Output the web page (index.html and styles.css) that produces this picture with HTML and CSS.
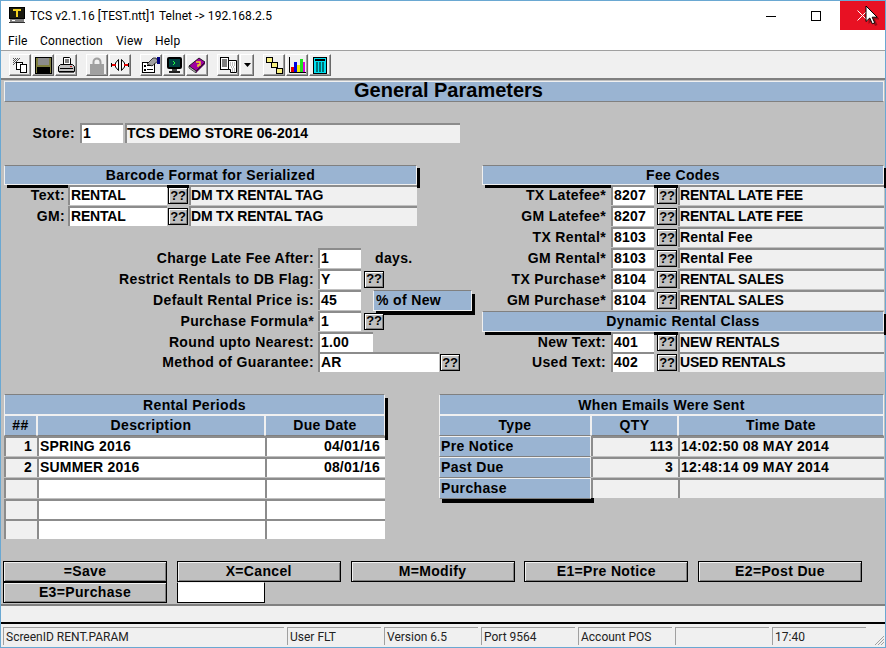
FILE: index.html
```html
<!DOCTYPE html>
<html lang="en">
<head>
<meta charset="utf-8">
<title>TCS v2.1.16</title>
<link rel="stylesheet" href="styles.css">
</head>
<body>
<div class="window">
  <header class="titlebar">
    <svg class="appicon" width="16" height="16" viewBox="0 0 16 16"><rect x="0" y="0" width="16" height="12" fill="#000"/><rect x="1" y="1" width="14" height="10" fill="#1a1a10"/><path d="M4 2h8v2H9v6H7V4H4z" fill="#f0d020"/><rect x="1" y="12" width="14" height="3" fill="#808080"/><rect x="3" y="13" width="3" height="1" fill="#fff"/><rect x="0" y="15" width="16" height="1" fill="#303030"/></svg>
    <span class="wintitle">TCS v2.1.16 [TEST.ntt]1 Telnet -&gt; 192.168.2.5</span>
    <div class="wincontrols">
      <span class="wc"><svg width="10" height="10" viewBox="0 0 10 10"><rect x="0" y="5" width="10" height="1" fill="#000"/></svg></span>
      <span class="wc wc-max"><svg width="10" height="10" viewBox="0 0 10 10"><rect x=".5" y=".5" width="9" height="9" fill="none" stroke="#000"/></svg></span>
      <span class="wc wc-close"><svg width="11" height="11" viewBox="0 0 11 11"><path d="M.5.5l10 10M10.5.5l-10 10" stroke="#fff" fill="none"/></svg></span>
    </div>
  </header>
  <nav class="menubar"><span>File</span><span>Connection</span><span>View</span><span>Help</span></nav>
  <div class="toolbar">
    <div class="tbgroup">
      <span class="tb"><svg width="16" height="16" viewBox="0 0 16 16"><path d="M1 1h1v1H1zM3 1h1v1H3zM5 1h1v1H5zM7 1h1v1H7zM2 2h1v1H2zM4 2h1v1H4zM6 2h1v1H6zM1 3h1v1H1zM3 3h1v1H3zM5 3h1v1H5zM2 4h1v1H2zM4 4h1v1H4zM1 5h1v1H1zM3 5h1v1H3zM2 6h1v1H2zM1 7h1v1H1z" fill="#555"/><rect x="4.500" y="5.500" width="6" height="7" fill="#fff" stroke="#000"/><rect x="8.500" y="7.500" width="6" height="8" fill="#fff" stroke="#000"/></svg></span>
      <span class="tb"><svg width="17" height="17" viewBox="0 0 17 17"><rect x=".5" y=".5" width="16" height="16" fill="#808040" stroke="#000"/><rect x="3" y="1" width="11" height="7" fill="#8c8c8c"/><rect x="2" y="10" width="13" height="6" fill="#000"/></svg></span>
      <span class="tb"><svg width="17" height="16" viewBox="0 0 17 16"><path d="M5.500 7.500v-7h6l1 1v6" fill="#fff" stroke="#000"/><path d="M7 3h4M7 5h4" stroke="#000"/><path d="M.5 14.500v-5l2-2h12l2 2v5z" fill="#c0c0c0" stroke="#000"/><rect x="2" y="11" width="13" height="1" fill="#000"/><rect x="12" y="9" width="2" height="1" fill="#c02020"/><rect x="1" y="15" width="15" height="1" fill="#606060"/></svg></span>
    </div>
    <div class="tbgroup">
      <span class="tb"><svg width="14" height="17" viewBox="0 0 14 17"><path d="M2.500 8V5a4.500 4.500 0 0 1 9 0v3H9.500V5a2.500 2.500 0 0 0-5 0v3z" fill="#a0a0a0"/><rect x="0" y="7" width="14" height="10" fill="#a0a0a0"/></svg></span>
      <span class="tb"><svg width="18" height="16" viewBox="0 0 18 16"><path d="M7.500 2.500L4.500 6v4l3 3.500zM10.500 2.500l3 3.500v4l-3 3.500z" fill="#fff" stroke="#000"/><rect x="1" y="7" width="4" height="2" fill="#e00000"/><rect x="13" y="7" width="4" height="2" fill="#e00000"/><rect x="0" y="6" width="1" height="4" fill="#000"/><rect x="17" y="6" width="1" height="4" fill="#000"/></svg></span>
    </div>
    <div class="tbgroup">
      <span class="tb"><svg width="18" height="16" viewBox="0 0 18 16"><rect x=".5" y="5.500" width="12" height="10" fill="#fff" stroke="#000"/><path d="M2 8h2v2H2zM5 8h6v1H5zM2 12h2v2H2zM5 12h6v1H5z" fill="#000"/><path d="M5 7l6-6 3 0 2 3-6 5z" fill="#a0a0a0" stroke="#000" stroke-width=".7"/><rect x="15" y="0" width="3" height="7" fill="#000080"/></svg></span>
      <span class="tb"><svg width="17" height="17" viewBox="0 0 17 17"><rect x="1" y="0" width="15" height="12" rx="2" fill="#000"/><rect x="3" y="2" width="11" height="8" fill="#004040"/><path d="M7 4l2 2-2 2" stroke="#20ff40" fill="none"/><rect x="6" y="12" width="5" height="2" fill="#404040"/><rect x="3" y="14" width="11" height="2" fill="#202020"/></svg></span>
      <span class="tb"><svg width="18" height="16" viewBox="0 0 18 16"><path d="M1 9L11 1l6 4-9 9z" fill="#a000a0" stroke="#000" stroke-width=".8"/><path d="M1 9l7 5v2L1 11z" fill="#c0c0c0" stroke="#000" stroke-width=".6"/><path d="M8 14l9-9v2l-9 9z" fill="#500050"/><path d="M8 5h4v3h-2v2" stroke="#f0e020" stroke-width="1.400" fill="none"/></svg></span>
    </div>
    <div class="tbgroup">
      <span class="tb"><svg width="17" height="16" viewBox="0 0 17 16"><rect x=".5" y=".5" width="8" height="12" fill="#fff" stroke="#000"/><path d="M2 3h5M2 5h5M2 7h5M2 9h5" stroke="#000"/><path d="M8.500 3.500h8v12h-6v-3h-2z" fill="#fff" stroke="#000"/><path d="M10 6h5M10 8h5M11 10h4M12 12h3M12 14h3" stroke="#808080" stroke-dasharray="1 1"/></svg></span>
      <span class="tb tb-narrow"><svg width="7" height="4" viewBox="0 0 7 4"><path d="M0 0h7L3.500 4z" fill="#000"/></svg></span>
    </div>
    <div class="tbgroup">
      <span class="tb"><svg width="17" height="17" viewBox="0 0 17 17"><path d="M4 4l5 5 4 4" stroke="#000" fill="none"/><rect x=".5" y=".5" width="6" height="5" fill="#f8f080" stroke="#000"/><rect x="5.500" y="5.500" width="6" height="5" fill="#f8f080" stroke="#000"/><rect x="10.500" y="11.500" width="6" height="5" fill="#f8f080" stroke="#000"/></svg></span>
      <span class="tb"><svg width="17" height="16" viewBox="0 0 17 16"><path d="M.5 0v15.500H17" stroke="#000" fill="none"/><rect x="2" y="10" width="3" height="5" fill="#e00000"/><rect x="5" y="5" width="3" height="10" fill="#0000e0"/><rect x="8" y="8" width="3" height="7" fill="#f0f000"/><rect x="11" y="2" width="3" height="13" fill="#20e020"/><rect x="14" y="5" width="2" height="10" fill="#e000e0"/></svg></span>
      <span class="tb"><svg width="14" height="17" viewBox="0 0 14 17"><rect x=".5" y=".5" width="13" height="16" fill="#00e0f0" stroke="#000"/><rect x="2" y="2" width="10" height="2" fill="#000"/><path d="M4 5v10M7 5v10M10 5v10" stroke="#004040" stroke-width="1.400"/></svg></span>
    </div>
  </div>

  <main class="screen">
    <h1 class="row formtitle">General Parameters</h1>
    <div class="row"></div>
    <div class="row">
      <label class="lbl lbl-store">Store:</label>
      <span class="fld w-store">1</span>
      <span class="fld ro w-storedesc store-name">TCS DEMO STORE 06-2014</span>
    </div>
    <div class="row"></div>

    <div class="columns">
      <section class="col-left">
        <h2 class="row head shadowed">Barcode Format for Serialized</h2>
        <div class="row">
          <label class="lbl lbl-bar">Text:</label><span class="fld w-bar caps">RENTAL</span><button class="q">??</button><span class="fld ro w-bardesc caps">DM TX RENTAL TAG</span>
        </div>
        <div class="row">
          <label class="lbl lbl-bar">GM:</label><span class="fld w-bar caps">RENTAL</span><button class="q">??</button><span class="fld ro w-bardesc caps">DM TX RENTAL TAG</span>
        </div>
        <div class="row"></div>
        <div class="row"><label class="lbl lbl-opt">Charge Late Fee After:</label><span class="fld w-sm">1</span><span class="plain">days.</span></div>
        <div class="row"><label class="lbl lbl-opt">Restrict Rentals to DB Flag:</label><span class="fld w-sm">Y</span><button class="q q-near">??</button></div>
        <div class="row"><label class="lbl lbl-opt">Default Rental Price is:</label><span class="fld w-sm">45</span><span class="pricetag">% of New</span></div>
        <div class="row"><label class="lbl lbl-opt">Purchase Formula*</label><span class="fld w-sm">1</span><button class="q q-near">??</button></div>
        <div class="row"><label class="lbl lbl-opt">Round upto Nearest:</label><span class="fld w-md">1.00</span></div>
        <div class="row"><label class="lbl lbl-opt">Method of Guarantee:</label><span class="fld w-lg">AR</span><button class="q">??</button></div>
      </section>

      <section class="col-right">
        <h2 class="row head shadowed">Fee Codes</h2>
        <div class="row"><label class="lbl lbl-fee">TX Latefee*</label><span class="fld w-code">8207</span><button class="q q-fee">??</button><span class="fld ro w-feedesc caps">RENTAL LATE FEE</span></div>
        <div class="row"><label class="lbl lbl-fee">GM Latefee*</label><span class="fld w-code">8207</span><button class="q q-fee">??</button><span class="fld ro w-feedesc caps">RENTAL LATE FEE</span></div>
        <div class="row"><label class="lbl lbl-fee">TX Rental*</label><span class="fld w-code">8103</span><button class="q q-fee">??</button><span class="fld ro w-feedesc">Rental Fee</span></div>
        <div class="row"><label class="lbl lbl-fee">GM Rental*</label><span class="fld w-code">8103</span><button class="q q-fee">??</button><span class="fld ro w-feedesc">Rental Fee</span></div>
        <div class="row"><label class="lbl lbl-fee">TX Purchase*</label><span class="fld w-code">8104</span><button class="q q-fee">??</button><span class="fld ro w-feedesc caps">RENTAL SALES</span></div>
        <div class="row"><label class="lbl lbl-fee">GM Purchase*</label><span class="fld w-code">8104</span><button class="q q-fee">??</button><span class="fld ro w-feedesc caps">RENTAL SALES</span></div>
        <h2 class="row head shadowed">Dynamic Rental Class</h2>
        <div class="row"><label class="lbl lbl-fee">New Text:</label><span class="fld w-code">401</span><button class="q q-fee">??</button><span class="fld ro w-feedesc caps">NEW RENTALS</span></div>
        <div class="row"><label class="lbl lbl-fee">Used Text:</label><span class="fld w-code">402</span><button class="q q-fee">??</button><span class="fld ro w-feedesc caps">USED RENTALS</span></div>
      </section>
    </div>

    <div class="row"></div>

    <div class="columns">
      <section class="periods">
        <div class="shadow-group">
          <h2 class="row head">Rental Periods</h2>
          <div class="row">
            <span class="th c-num">##</span><span class="th c-desc">Description</span><span class="th c-date">Due Date</span>
          </div>
        </div>
        <div class="row"><span class="fld ro c-num right">1</span><span class="fld c-desc">SPRING 2016</span><span class="fld c-date right">04/01/16</span></div>
        <div class="row"><span class="fld ro c-num right">2</span><span class="fld c-desc">SUMMER 2016</span><span class="fld c-date right">08/01/16</span></div>
        <div class="row"><span class="fld ro c-num"></span><span class="fld c-desc"></span><span class="fld c-date"></span></div>
        <div class="row"><span class="fld ro c-num"></span><span class="fld c-desc"></span><span class="fld c-date"></span></div>
        <div class="row"><span class="fld ro c-num"></span><span class="fld c-desc"></span><span class="fld c-date"></span></div>
      </section>

      <section class="emails">
        <h2 class="row head">When Emails Were Sent</h2>
        <div class="row"><span class="th c-type">Type</span><span class="th c-qty">QTY</span><span class="th c-time">Time Date</span></div>
        <div class="row"><span class="th left c-type">Pre Notice</span><span class="fld ro c-qty right">113</span><span class="fld ro c-time">14:02:50 08 MAY 2014</span></div>
        <div class="row"><span class="th left c-type">Past Due</span><span class="fld ro c-qty right">3</span><span class="fld ro c-time">12:48:14 09 MAY 2014</span></div>
        <div class="row"><span class="th left c-type shadowed">Purchase</span><span class="fld ro c-qty"></span><span class="fld ro c-time"></span></div>
      </section>
    </div>

    <div class="row"></div>

    <div class="actions">
      <button class="act">=Save</button>
      <button class="act">X=Cancel</button>
      <button class="act">M=Modify</button>
      <button class="act">E1=Pre Notice</button>
      <button class="act">E2=Post Due</button>
      <button class="act">E3=Purchase</button>
      <span class="cmd"></span>
    </div>
  </main>

  <div class="msgbar"></div>
  <footer class="statusbar">
    <span class="st st-screen">ScreenID RENT.PARAM</span>
    <span class="st">User FLT</span>
    <span class="st">Version 6.5</span>
    <span class="st">Port 9564</span>
    <span class="st">Account POS</span>
    <span class="st"></span>
    <span class="st">17:40</span>
    <svg class="grip" width="11" height="11" viewBox="0 0 11 11"><path d="M10 1L1 10M10 4l-6 6M10 7l-3 3" stroke="#a0a0a0"/></svg>
  </footer>

  <svg class="cursor" width="14" height="22" viewBox="0 0 14 22"><path d="M2 2v16l4-3.500 2.500 5.500 2.500-1-2.500-5.500h5z" fill="#000" opacity=".35" transform="translate(1.500 1)"/><path d="M1 1v15.500l3.800-3.500 2.500 5.800 2.400-1-2.500-5.600h5z" fill="#fff" stroke="#000"/></svg>
</div>
</body>
</html>
```

FILE: styles.css
```css
* { box-sizing: border-box; }
html, body { margin: 0; padding: 0; }
body {
  width: 886px;
  height: 648px;
  overflow: hidden;
  font-family: "Liberation Sans", Arial, sans-serif;
}
.window {
  position: relative;
  width: 886px;
  height: 648px;
  border: 1px solid #6aa8d2;
  background: #f0f0f0;
  display: flex;
  flex-direction: column;
}
.titlebar {
  height: 29px;
  flex: none;
  background: #fff;
  display: flex;
  align-items: flex-start;
  font-family: Roboto, sans-serif;
  font-size: 12px;
  color: #000;
}
.appicon { margin: 6px 0 0 8px; flex: none; }
.wintitle { margin: 6px 0 0 5px; line-height: 18px; letter-spacing: .06px; }
.wincontrols { margin-left: auto; display: flex; }
.wc { width: 45px; height: 29px; display: flex; align-items: center; justify-content: center; }
.wc-max { margin-right: 2px; }
.wc-close { background: #e81123; }
.menubar {
  height: 20px;
  flex: none;
  background: #fff;
  display: flex;
  padding-left: 7px;
  font-family: Roboto, sans-serif;
  font-size: 12px;
  line-height: 22px;
  letter-spacing: .2px;
  color: #000;
}
.menubar span:nth-child(1) { width: 32px; }
.menubar span:nth-child(2) { width: 76px; }
.menubar span:nth-child(3) { width: 39px; }
.toolbar {
  height: 28px;
  flex: none;
  background: #f0f0f0;
  border-top: 1px solid #a0a0a0;
  display: flex;
  gap: 9px;
  padding: 3px 0 0 8px;
}
.tbgroup { display: flex; gap: 1px; }
.tb {
  width: 22px;
  height: 22px;
  display: flex;
  align-items: center;
  justify-content: center;
  background: #f0f0f0;
  border: 1px solid;
  border-color: #fff #696969 #696969 #fff;
  box-shadow: inset -1px -1px 0 #a0a0a0;
}
.tb-narrow { width: 14px; }

.screen {
  flex: none;
  height: 526px;
  background: #c0c0c0;
  border-top: 2px solid #808080;
  padding: 1.05px 1px 0 3px;
}
.row {
  display: flex;
  height: 20.875px;
  margin: 0;
  position: relative;
  z-index: 1;
  flex: none;
}
.formtitle {
  justify-content: center;
  align-items: center;
  padding: 0 0 2px 9px;
  background: #9ab4d2;
  border: 1px solid #f0f0f0;
  border-bottom-color: #808080;
  font-size: 20px;
  font-weight: 700;
  line-height: 18px;
}
.lbl, .fld, .th, .head, .plain, .pricetag, .q, .act {
  font-family: "Liberation Sans", Arial, sans-serif;
  font-size: 14px;
  font-weight: 700;
  color: #000;
  letter-spacing: .35px;
}
.lbl { line-height: 20px; text-align: right; flex: none; }
.lbl-store { width: 71px; margin-right: 5px; }
.lbl-bar { width: 61px; margin-right: 3px; }
.lbl-opt { width: 310px; margin-right: 4px; }
.lbl-fee { width: 124px; margin-right: 5px; }
.fld {
  height: 20px;
  flex: none;
  background: #fff;
  border-top: 2px solid #8c8c8c;
  border-left: 2px solid #8c8c8c;
  padding-left: 1px;
  line-height: 16px;
  white-space: nowrap;
  position: relative;
  letter-spacing: .2px;
}
.caps { letter-spacing: -.2px; }
.store-name { letter-spacing: 0; }
.ro { background: #f0f0f0; }
.right { text-align: right; padding-right: 5px; }
.w-store { width: 43px; }
.w-storedesc { width: 335px; margin-left: 2px; padding-left: 0; }
.w-bar { width: 99px; }
.w-bardesc { width: 228px; margin-left: 1px; padding-left: 0; }
.w-sm { width: 43px; }
.w-md { width: 55px; }
.w-lg { width: 121px; }
.w-code { width: 43px; }
.w-feedesc { width: 206px; margin-left: 1px; padding-left: 0; }
.q {
  flex: none;
  width: 20px;
  height: 17px;
  margin: 2px 0 0 1px;
  padding: 0;
  background: #c0c0c0;
  border: 1px solid #000;
  box-shadow: inset 1px 1px 0 #fff, inset -1px -1px 0 #808080;
  font-size: 13px;
  line-height: 14px;
  position: relative;
  letter-spacing: -.2px;
}
.q-near { margin-left: 3px; }
.q-fee { margin-left: 3px; }
.plain { margin-left: 14px; line-height: 20px; }
.pricetag {
  width: 99px;
  height: 21px;
  flex: none;
  white-space: nowrap;
  margin-left: 12px;
  padding-left: 2px;
  background: #9ab4d2;
  border: 1px solid #f0f0f0;
  border-top-color: #808080;
  line-height: 18px;
  box-shadow: 3px 4px 0 #000;
}
.head {
  justify-content: center;
  align-items: center;
  background: #9ab4d2;
  border: 1px solid #f0f0f0;
  border-top-color: #808080;
  line-height: 18px;
}
.shadowed { box-shadow: 3px 3px 0 #000; }
.columns { display: flex; justify-content: space-between; }
.col-left { width: 413px; flex: none; }
.col-right { width: 402px; flex: none; }
.periods { width: 381px; flex: none; }
.emails { width: 445px; flex: none; }
.shadow-group { box-shadow: 3px 4px 0 #000; }
.th {
  display: block;
  flex: none;
  height: 20.875px;
  background: #9ab4d2;
  border: 1px solid #f0f0f0;
  border-bottom-color: #808080;
  text-align: center;
  line-height: 18px;
}
.th.left { text-align: left; padding-left: 1px; line-height: 19px; }
.th.shadowed { box-shadow: 3px 4px 0 #000; }
.c-num { width: 33px; }
.c-desc { width: 228px; }
.c-date { width: 120px; }
.c-type { width: 152px; }
.c-qty { width: 87px; }
.c-time { width: 206px; }
.actions {
  display: grid;
  grid-template-columns: repeat(5, 164px);
  column-gap: 9.75px;
  grid-auto-rows: 20.875px;
  margin-left: -1px;
}
.act {
  padding: 0;
  background: #c0c0c0;
  border: 1px solid #000;
  box-shadow: inset 1px 1px 0 #f0f0f0, inset -1px -1px 0 #808080;
  line-height: 17px;
}
.cmd {
  width: 88px;
  background: #fff;
  border: 1px solid #000;
  border-top-color: #f0f0f0;
}
.msgbar {
  flex: none;
  height: 18px;
  background: #f0f0f0;
  border-top: 2px solid #808080;
}
.statusbar {
  flex: none;
  height: 24px;
  display: flex;
  gap: 3px;
  padding: 3px 0 0 2px;
  border-top: 2px solid #000;
  background: #f0f0f0;
  font-family: Roboto, sans-serif;
  font-size: 12px;
  color: #222;
  position: relative;
}
.st {
  width: 94px;
  height: 18px;
  flex: none;
  border-top: 1px solid #a0a0a0;
  border-left: 1px solid #a0a0a0;
  padding-left: 2px;
  line-height: 18px;
  white-space: nowrap;
}
.st-screen { width: 281px; }
.grip { position: absolute; right: 0; bottom: 0; }
.cursor { position: absolute; left: 864px; top: 4px; z-index: 5; }
```
